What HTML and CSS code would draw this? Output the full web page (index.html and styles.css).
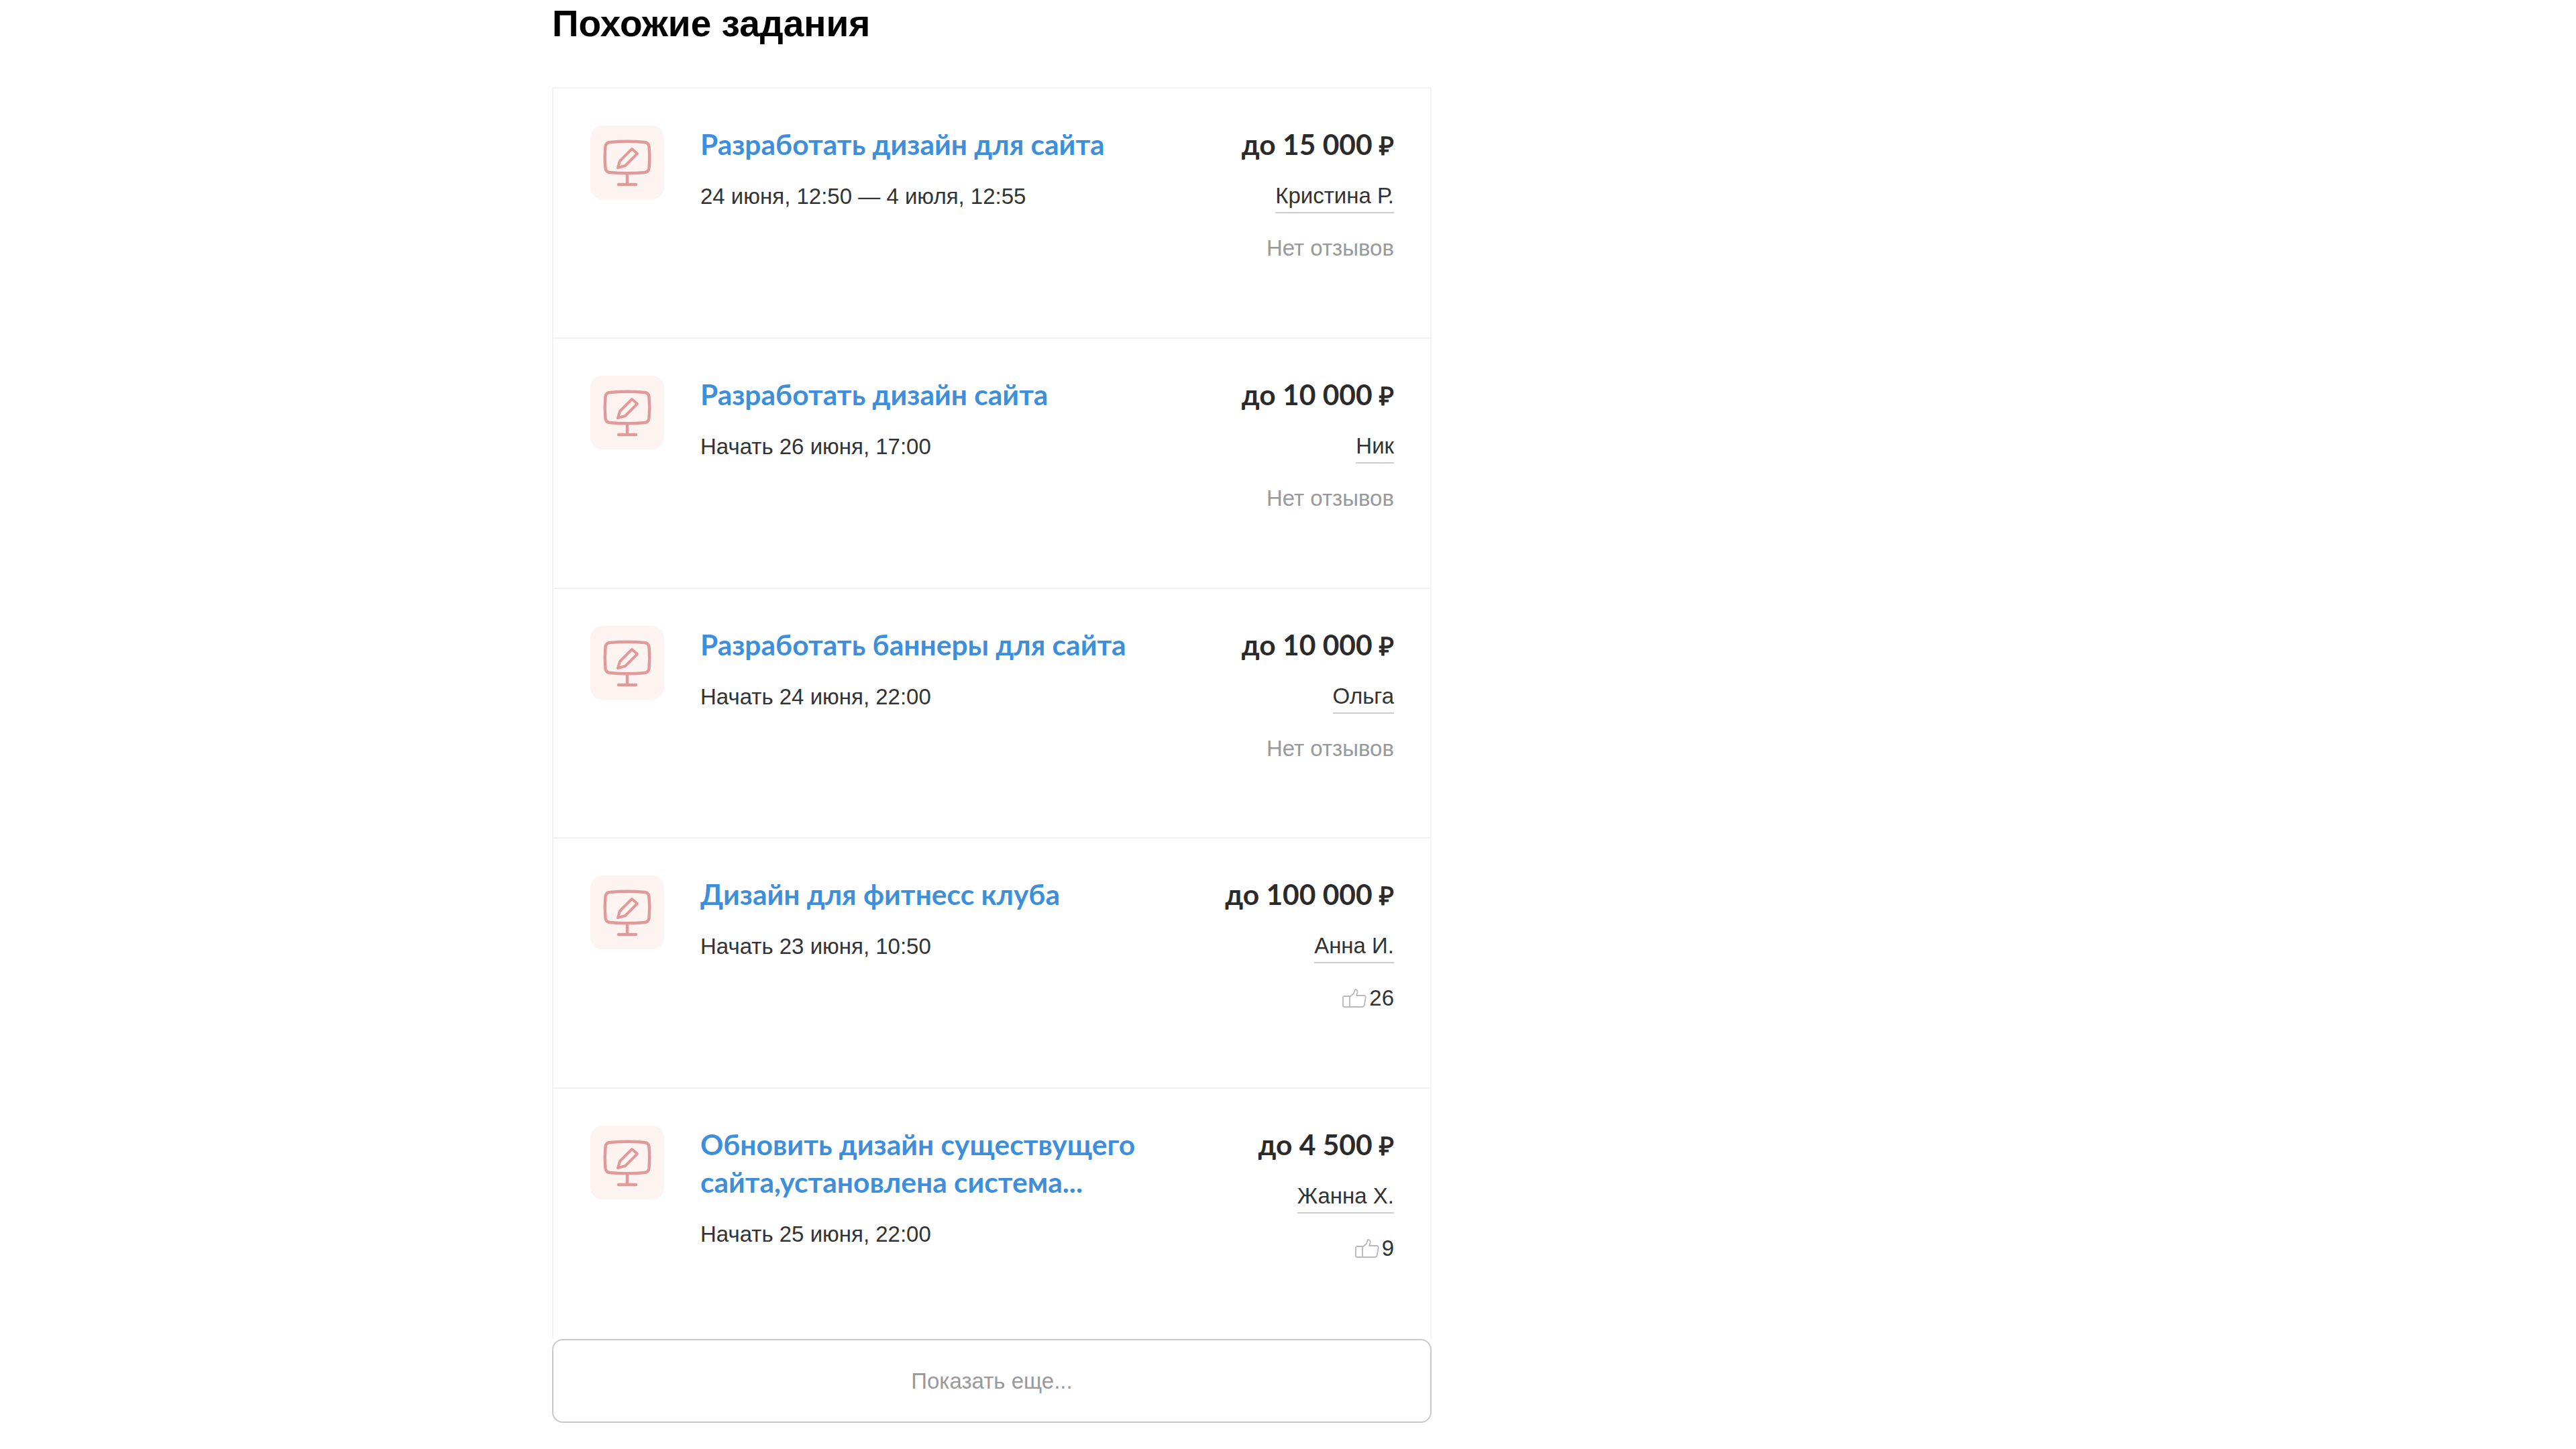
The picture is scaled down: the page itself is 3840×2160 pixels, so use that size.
FILE: index.html
```html
<!DOCTYPE html>
<html lang="ru">
<head>
<meta charset="utf-8">
<title>Похожие задания</title>
<link rel="stylesheet" href="styles.css">
</head>
<body>
<svg class="defs" width="0" height="0">
  <symbol id="monitor" viewBox="0 0 110 110">
    <path d="M29 25c17-1.600 35-1.600 52 0 4 .4 6 2.500 6.500 6.500 1 10 1 22 0 32-.5 4-2.500 6.100-6.500 6.500-17 1.600-35 1.600-52 0-4-.4-6-2.500-6.500-6.500-1-10-1-22 0-32 .5-4 2.500-6.100 6.500-6.500z" fill="none" stroke="#e09a9a" stroke-width="4.500"/>
    <path d="M55 72v15M42 88h26" fill="none" stroke="#e09a9a" stroke-width="4.500" stroke-linecap="round"/>
    <path d="M41 63l3-10 18-18 8 7-18 18z" fill="none" stroke="#e09a9a" stroke-width="4" stroke-linejoin="round"/>
  </symbol>
  <symbol id="thumb" viewBox="0 0 36 28">
    <path d="M11 11H3a2 2 0 0 0-2 2v12a2 2 0 0 0 2 2h8z" fill="none" stroke="#b9b9b9" stroke-width="1.800"/>
    <path d="M11 12l6-5 2-6c3 0 4 2 3.500 4.500L21 10h11c2 0 3 1.500 2.700 3.500l-1.700 10c-.4 2.300-1.500 3.500-4 3.500H11" fill="none" stroke="#b9b9b9" stroke-width="1.800" stroke-linejoin="round"/>
  </symbol>
</svg>
<main class="page">
  <h2 class="heading">Похожие задания</h2>
  <section class="list">
    <article class="task">
      <svg class="task-icon"><use href="#monitor"/></svg>
      <div class="task-main">
        <a class="task-title">Разработать дизайн для сайта</a>
        <p class="task-date">24 июня, 12:50 — 4 июля, 12:55</p>
      </div>
      <div class="task-side">
        <div class="price">до 15 000 <span class="rub">₽</span></div>
        <a class="author">Кристина Р.</a>
        <div class="reviews none">Нет отзывов</div>
      </div>
    </article>
    <article class="task">
      <svg class="task-icon"><use href="#monitor"/></svg>
      <div class="task-main">
        <a class="task-title">Разработать дизайн сайта</a>
        <p class="task-date">Начать 26 июня, 17:00</p>
      </div>
      <div class="task-side">
        <div class="price">до 10 000 <span class="rub">₽</span></div>
        <a class="author">Ник</a>
        <div class="reviews none">Нет отзывов</div>
      </div>
    </article>
    <article class="task tight">
      <svg class="task-icon"><use href="#monitor"/></svg>
      <div class="task-main">
        <a class="task-title">Разработать баннеры для сайта</a>
        <p class="task-date">Начать 24 июня, 22:00</p>
      </div>
      <div class="task-side">
        <div class="price">до 10 000 <span class="rub">₽</span></div>
        <a class="author">Ольга</a>
        <div class="reviews none">Нет отзывов</div>
      </div>
    </article>
    <article class="task">
      <svg class="task-icon"><use href="#monitor"/></svg>
      <div class="task-main">
        <a class="task-title">Дизайн для фитнесс клуба</a>
        <p class="task-date">Начать 23 июня, 10:50</p>
      </div>
      <div class="task-side">
        <div class="price">до 100 000 <span class="rub">₽</span></div>
        <a class="author">Анна И.</a>
        <div class="reviews"><svg class="thumb"><use href="#thumb"/></svg>26</div>
      </div>
    </article>
    <article class="task">
      <svg class="task-icon"><use href="#monitor"/></svg>
      <div class="task-main">
        <a class="task-title">Обновить дизайн существущего сайта,установлена система...</a>
        <p class="task-date">Начать 25 июня, 22:00</p>
      </div>
      <div class="task-side">
        <div class="price">до 4 500 <span class="rub">₽</span></div>
        <a class="author">Жанна Х.</a>
        <div class="reviews"><svg class="thumb"><use href="#thumb"/></svg>9</div>
      </div>
    </article>
  </section>
  <button class="more">Показать еще...</button>
</main>
</body>
</html>
```

FILE: styles.css
```css
* { box-sizing: border-box; }
html, body { margin: 0; background: #fff; }
body { height: 2160px; overflow: hidden; font-family: "Liberation Sans", Arial, sans-serif; color: #333; }
.defs { position: absolute; }
.page { width: 1311px; margin-left: 823px; }
.heading { margin: 0; height: 130px; font-size: 55px; line-height: 70px; font-weight: 700; color: #000; }
.list { border: 2px solid #f4f4f4; border-bottom: 0; }
.task { display: flex; height: 373px; padding: 55px 54px 0 55px; border-bottom: 2px solid #f1f1f1; }
.task.tight { height: 372px; }
.task:last-child { border-bottom: 0; }
.task-icon { flex: none; width: 110px; height: 110px; border-radius: 18px; background: #fdf4f1; }
.task-main { width: 670px; margin-left: 54px; }
.task-title { display: block; font-family: Lato, "Open Sans", sans-serif; font-size: 42.5px; line-height: 56px; font-weight: 700; color: #3d8fdb; }
.task-date { margin: 30px 0 0; font-size: 33px; line-height: 40px; color: #333; }
.task-side { flex: 1; display: flex; flex-direction: column; align-items: flex-end; }
.price { font-family: Lato, "Open Sans", sans-serif; font-size: 42.5px; line-height: 56px; font-weight: 700; color: #2b2b2b; white-space: nowrap; }
.rub { font-size: 38px; }
.author { margin-top: 28px; font-size: 33px; line-height: 40px; padding-bottom: 4px; border-bottom: 2px solid #ccc; white-space: nowrap; }
.reviews { display: flex; align-items: center; margin-top: 32px; font-size: 33px; line-height: 40px; color: #333; }
.reviews.none { color: #999; }
.thumb { width: 36px; height: 28px; margin-right: 4px; }
.more { display: block; width: 100%; height: 125px; border: 2px solid #c9c9c9; border-radius: 16px; background: #fff; font-family: "Liberation Sans", Arial, sans-serif; font-size: 33px; color: #999; }
```
